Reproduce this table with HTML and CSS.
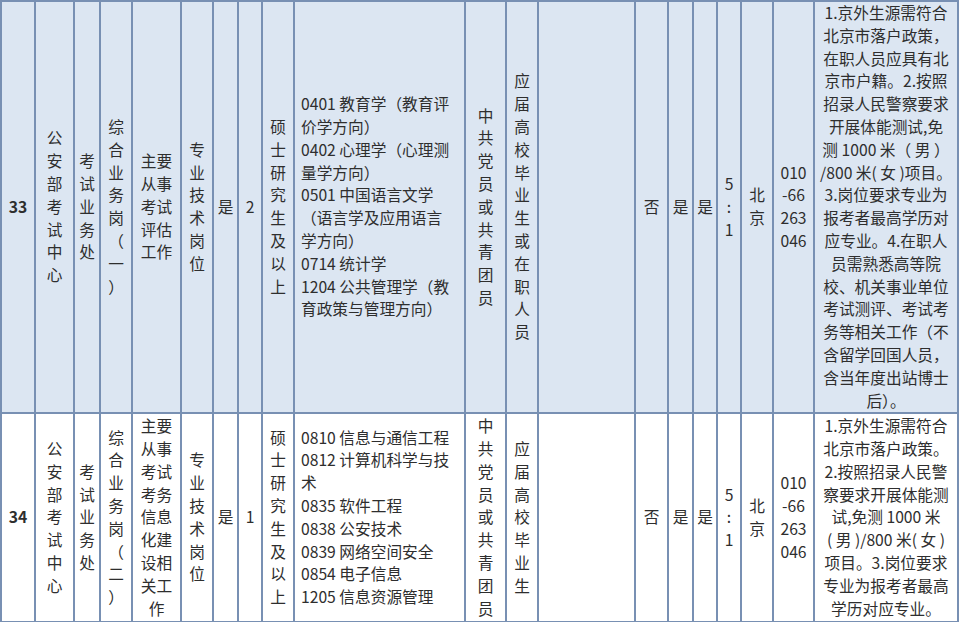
FILE: index.html
```html
<!DOCTYPE html>
<html lang="zh-CN">
<head>
<meta charset="utf-8">
<title>职位表</title>
<link rel="stylesheet" href="styles.css">
</head>
<body>
<table class="jobs">
  <colgroup>
    <col class="w34"><col class="w39"><col class="w26"><col class="w32"><col class="w49">
    <col class="w32"><col class="w25"><col class="w24"><col class="w32"><col class="w171">
    <col class="w41"><col class="w32"><col class="w97"><col class="w33"><col class="w25">
    <col class="w24"><col class="w24"><col class="w32"><col class="w41"><col class="w144">
  </colgroup>
  <tbody>
    <tr class="row-a">
      <td class="num">33</td>
      <td>公<br>安<br>部<br>考<br>试<br>中<br>心</td>
      <td>考<br>试<br>业<br>务<br>处</td>
      <td>综<br>合<br>业<br>务<br>岗<br>（<br>一<br>）</td>
      <td>主要<br>从事<br>考试<br>评估<br>工作</td>
      <td>专<br>业<br>技<br>术<br>岗<br>位</td>
      <td>是</td>
      <td>2</td>
      <td>硕<br>士<br>研<br>究<br>生<br>及<br>以<br>上</td>
      <td class="major">0401 教育学（教育评<br>价学方向）<br>0402 心理学（心理测<br>量学方向）<br>0501 中国语言文学<br>（语言学及应用语言<br>学方向）<br>0714 统计学<br>1204 公共管理学（教<br>育政策与管理方向）</td>
      <td>中<br>共<br>党<br>员<br>或<br>共<br>青<br>团<br>员</td>
      <td>应<br>届<br>高<br>校<br>毕<br>业<br>生<br>或<br>在<br>职<br>人<br>员</td>
      <td></td>
      <td>否</td>
      <td>是</td>
      <td>是</td>
      <td>5<br>:<br>1</td>
      <td>北<br>京</td>
      <td>010<br>-66<br>263<br>046</td>
      <td class="notes">1.京外生源需符合<br>北京市落户政策，<br>在职人员应具有北<br>京市户籍。2.按照<br>招录人民警察要求<br>开展体能测试,免<br>测 1000 米（ 男 ）<br>/800 米( 女 )项目。<br>3.岗位要求专业为<br>报考者最高学历对<br>应专业。4.在职人<br>员需熟悉高等院<br>校、机关事业单位<br>考试测评、考试考<br>务等相关工作（不<br>含留学回国人员，<br>含当年度出站博士<br>后）。</td>
    </tr>
    <tr class="row-b">
      <td class="num">34</td>
      <td>公<br>安<br>部<br>考<br>试<br>中<br>心</td>
      <td>考<br>试<br>业<br>务<br>处</td>
      <td>综<br>合<br>业<br>务<br>岗<br>（<br>二<br>）</td>
      <td>主要<br>从事<br>考试<br>考务<br>信息<br>化建<br>设相<br>关工<br>作</td>
      <td>专<br>业<br>技<br>术<br>岗<br>位</td>
      <td>是</td>
      <td>1</td>
      <td>硕<br>士<br>研<br>究<br>生<br>及<br>以<br>上</td>
      <td class="major">0810 信息与通信工程<br>0812 计算机科学与技<br>术<br>0835 软件工程<br>0838 公安技术<br>0839 网络空间安全<br>0854 电子信息<br>1205 信息资源管理</td>
      <td>中<br>共<br>党<br>员<br>或<br>共<br>青<br>团<br>员</td>
      <td>应<br>届<br>高<br>校<br>毕<br>业<br>生</td>
      <td></td>
      <td>否</td>
      <td>是</td>
      <td>是</td>
      <td>5<br>:<br>1</td>
      <td>北<br>京</td>
      <td>010<br>-66<br>263<br>046</td>
      <td class="notes">1.京外生源需符合<br>北京市落户政策。<br>2.按照招录人民警<br>察要求开展体能测<br>试,免测 1000 米<br>( 男 )/800 米( 女 )<br>项目。3.岗位要求<br>专业为报考者最高<br>学历对应专业。</td>
    </tr>
  </tbody>
</table>
</body>
</html>
```

FILE: styles.css
```css
html, body {
  margin: 0;
  padding: 0;
  background: #ffffff;
}

body {
  width: 960px;
  height: 622px;
  overflow: hidden;
}

.jobs {
  border-collapse: collapse;
  table-layout: fixed;
  width: 959px;
  font-family: "Noto Sans CJK SC", "Noto Sans", sans-serif;
  font-size: 15.7px;
  line-height: 22.8px;
  color: #2e2e2e;
}

.jobs td {
  border: 2px solid #7890b3;
  padding: 0;
  text-align: center;
  vertical-align: middle;
  overflow: hidden;
  white-space: nowrap;
}

.row-a td {
  background: #dce6f2;
}

.row-a {
  height: 412px;
}

.row-b td {
  background: #ffffff;
}

.row-b {
  height: 209px;
}

.jobs td.num {
  font-weight: bold;
}

.jobs td.major {
  text-align: left;
  padding-left: 6px;
}

.w24 { width: 24px; }
.w25 { width: 25px; }
.w26 { width: 26px; }
.w32 { width: 32px; }
.w33 { width: 33px; }
.w34 { width: 34px; }
.w39 { width: 39px; }
.w41 { width: 41px; }
.w49 { width: 49px; }
.w97 { width: 97px; }
.w144 { width: 144px; }
.w171 { width: 171px; }
```
